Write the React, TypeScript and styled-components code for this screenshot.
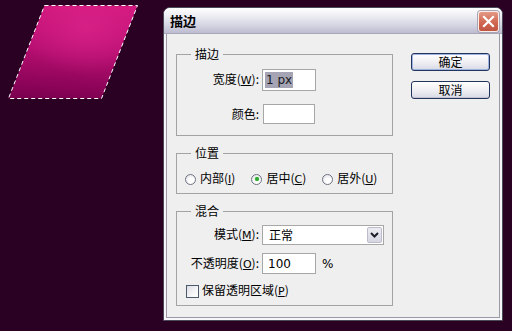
import React from 'react';
import styled, {createGlobalStyle} from 'styled-components';

const cjk = `"Noto Sans CJK SC", "DejaVu Sans", sans-serif`;
const latin = `"DejaVu Sans", "Noto Sans CJK SC", sans-serif`;

const GlobalStyle = createGlobalStyle`
    html, body {
        margin: 0;
        padding: 0;
        background: #2a0122;
    }
    body {
        font-family: ${cjk};
        font-size: 12px;
        color: #000;
    }
`;

const Key = ({k}: {k: string}) => (
    <>(<U>{k}</U>)</>
);

const App = () => {
    return (
        <Canvas>
            <GlobalStyle />
            <Shape width="163" height="110" viewBox="0 0 163 110">
                <defs>
                    <linearGradient id="fill" x1="0.45" y1="0" x2="0.35" y2="1">
                        <stop offset="0" stopColor="#d2187f" />
                        <stop offset="0.45" stopColor="#b90f72" />
                        <stop offset="1" stopColor="#7d0050" />
                    </linearGradient>
                    <radialGradient id="glow" cx="0.6" cy="0.25" r="0.5">
                        <stop offset="0" stopColor="#e0288f" stopOpacity="0.6" />
                        <stop offset="1" stopColor="#e0288f" stopOpacity="0" />
                    </radialGradient>
                </defs>
                <polygon points="44.5,5.5 137.5,5.5 101.5,98.5 8.5,98.5" fill="url(#fill)" />
                <polygon points="44.5,5.5 137.5,5.5 101.5,98.5 8.5,98.5" fill="url(#glow)" />
                <polygon points="44.5,5.5 137.5,5.5 101.5,98.5 8.5,98.5" fill="none"
                         stroke="#ffffff" strokeWidth="1" strokeDasharray="4 3" />
            </Shape>

            <Window>
                <TitleBar>
                    <Title>描边</Title>
                    <CloseButton>
                        <svg width="13" height="13" viewBox="0 0 13 13">
                            <path d="M2 2 L11 11 M11 2 L2 11" stroke="#fff" strokeWidth="2.2" strokeLinecap="square" />
                        </svg>
                    </CloseButton>
                </TitleBar>

                <Client>
                    <Groups>
                        <Group $pt={7} $pb={11}>
                            <Legend>描边</Legend>
                            <FormRow>
                                <Label>宽度<Key k="W" />:</Label>
                                <Field $w={54} $h={22}>
                                    <Selected>1 px</Selected>
                                </Field>
                            </FormRow>
                            <FormRow $gap={13}>
                                <Label>颜色:</Label>
                                <Field $w={52} $h={20} $ml={1} />
                            </FormRow>
                        </Group>

                        <Group $pt={9} $pb={5}>
                            <Legend>位置</Legend>
                            <RadioRow>
                                <RadioItem>
                                    <Radio />
                                    <span>内部<Key k="I" /></span>
                                </RadioItem>
                                <RadioItem>
                                    <Radio $checked />
                                    <span>居中<Key k="C" /></span>
                                </RadioItem>
                                <RadioItem>
                                    <Radio />
                                    <span>居外<Key k="U" /></span>
                                </RadioItem>
                            </RadioRow>
                        </Group>

                        <Group $pt={6} $pb={5}>
                            <Legend>混合</Legend>
                            <FormRow>
                                <Label>模式<Key k="M" />:</Label>
                                <Select>
                                    <SelectText>正常</SelectText>
                                    <DropButton>
                                        <svg width="9" height="6" viewBox="0 0 9 6">
                                            <path d="M1 1 L4.5 4.5 L8 1" fill="none" stroke="#1e1e28" strokeWidth="2" />
                                        </svg>
                                    </DropButton>
                                </Select>
                            </FormRow>
                            <FormRow $gap={8}>
                                <Label>不透明度<Key k="O" />:</Label>
                                <Field $w={54} $h={21}>
                                    <FieldText>100</FieldText>
                                </Field>
                                <Unit>%</Unit>
                            </FormRow>
                            <CheckRow>
                                <CheckBox />
                                <span>保留透明区域<Key k="P" /></span>
                            </CheckRow>
                        </Group>
                    </Groups>

                    <Buttons>
                        <Button $default>确定</Button>
                        <Button>取消</Button>
                    </Buttons>
                </Client>
            </Window>
        </Canvas>
    );
};

const Canvas = styled.div`
    width: 512px;
    height: 331px;
    display: flex;
    align-items: flex-start;
    overflow: hidden;
    background: #2a0122;
`;

const Shape = styled.svg`
    display: block;
    flex: none;
`;

const Window = styled.div`
    margin-top: 7px;
    width: 340px;
    box-sizing: border-box;
    border: 1px solid #4c4858;
    border-radius: 7px 7px 0 0;
    background: #f6f6fa;
    padding: 0 2px 2px;
    display: flex;
    flex-direction: column;
`;

const TitleBar = styled.div`
    height: 25px;
    margin: 0 -2px;
    padding: 0 3px 0 6px;
    display: flex;
    align-items: center;
    justify-content: space-between;
    border-radius: 6px 6px 0 0;
    background: linear-gradient(to bottom, #ffffff 0%, #eeeef4 30%, #d4d4e2 70%, #bdbcd0 100%);
    border-bottom: 1px solid #a6a6b6;
`;

const Title = styled.div`
    font-family: ${cjk};
    font-weight: bold;
    font-size: 13px;
    color: #000;
    line-height: 16px;
`;

const CloseButton = styled.div`
    width: 21px;
    height: 21px;
    box-sizing: border-box;
    margin-top: 2px;
    border: 1px solid #fbeee8;
    border-radius: 3px;
    background: linear-gradient(to bottom, #e39a86 0%, #d36a55 50%, #c05442 100%);
    display: flex;
    align-items: center;
    justify-content: center;
    box-shadow: 0 0 0 1px #a8a4b4;
`;

const Client = styled.div`
    display: flex;
    align-items: flex-start;
    background: #efefef;
    border: 1px solid #9a9aa6;
    border-top: none;
    padding: 12px 9px 11px 9px;
`;

const Groups = styled.div`
    display: flex;
    flex-direction: column;
    gap: 9px;
    width: 218px;
`;

const Group = styled.fieldset<{$pt: number; $pb: number}>`
    margin: 0;
    border: 1px solid #a3a3a3;
    padding: ${p => p.$pt}px 0 ${p => p.$pb}px 0;
    min-width: 0;
    line-height: 16px;
`;

const Legend = styled.legend`
    margin-left: 14px;
    padding: 0 4px;
    line-height: 16px;
    height: 16px;
    font-size: 12px;
`;

const FormRow = styled.div<{$gap?: number}>`
    display: flex;
    align-items: center;
    margin-top: ${p => p.$gap ?? 0}px;
`;

const Label = styled.div`
    width: 82px;
    margin-right: 3px;
    text-align: right;
    white-space: nowrap;
    line-height: 16px;
`;

const U = styled.span`
    text-decoration: underline;
    font-family: ${latin};
    font-size: 11px;
`;

const Field = styled.div<{$w: number; $h: number; $ml?: number}>`
    width: ${p => p.$w}px;
    height: ${p => p.$h}px;
    margin-left: ${p => p.$ml ?? 0}px;
    box-sizing: border-box;
    background: #fff;
    border: 1px solid #a7a7a7;
    display: flex;
    align-items: center;
    padding-left: 2px;
`;

const Selected = styled.span`
    background: #a4a4b4;
    color: #1a1a22;
    font-family: ${latin};
    font-size: 12px;
    line-height: 16px;
    padding: 0 1px;
`;

const FieldText = styled.span`
    font-family: ${latin};
    font-size: 12px;
    padding-left: 3px;
`;

const Unit = styled.span`
    margin-left: 6px;
    font-family: ${latin};
    font-size: 12px;
`;

const Select = styled.div`
    width: 122px;
    height: 20px;
    box-sizing: border-box;
    background: #fff;
    border: 1px solid #a7a7a7;
    display: flex;
    align-items: stretch;
    justify-content: space-between;
`;

const SelectText = styled.span`
    display: flex;
    align-items: center;
    padding-left: 6px;
`;

const DropButton = styled.div`
    width: 15px;
    margin: 1px;
    box-sizing: border-box;
    border: 1px solid #bcbccc;
    border-radius: 2px;
    background: linear-gradient(to bottom, #ececf2 0%, #d6d6e2 100%);
    display: flex;
    align-items: center;
    justify-content: center;
`;

const RadioRow = styled.div`
    display: flex;
    align-items: center;
    gap: 16px;
    padding-left: 8px;
    line-height: 16px;
`;

const RadioItem = styled.label`
    display: flex;
    align-items: center;
    gap: 4px;
`;

const Radio = styled.span<{$checked?: boolean}>`
    width: 11px;
    height: 11px;
    box-sizing: border-box;
    border-radius: 50%;
    border: 1px solid #6c7480;
    background: radial-gradient(circle at 60% 65%, #ffffff 30%, #dcdce4 100%);
    display: flex;
    align-items: center;
    justify-content: center;

    &::after {
        content: '';
        display: ${p => (p.$checked ? 'block' : 'none')};
        width: 4px;
        height: 4px;
        border-radius: 50%;
        background: #2ea82e;
        box-shadow: 0 0 1px #5ccd5c;
    }
`;

const CheckRow = styled.label`
    display: flex;
    align-items: center;
    gap: 3px;
    margin-top: 8px;
    padding-left: 9px;
    line-height: 16px;
`;

const CheckBox = styled.span`
    width: 13px;
    height: 13px;
    box-sizing: border-box;
    border: 1px solid #4c5a6c;
    background: linear-gradient(135deg, #dcdce4 0%, #f6f6f8 60%, #ffffff 100%);
`;

const Buttons = styled.div`
    margin-left: 18px;
    margin-top: 7px;
    display: flex;
    flex-direction: column;
    gap: 10px;
`;

const Button = styled.div<{$default?: boolean}>`
    width: 79px;
    height: 18px;
    box-sizing: border-box;
    border: 1px solid #23355c;
    border-radius: 3px;
    background: linear-gradient(to bottom, #ffffff 0%, #f0f0f4 50%, #d8d8e4 100%);
    box-shadow: ${p => (p.$default ? 'inset 0 0 0 1px #9db3e2' : 'inset 0 -1px 0 #c4c4d4')};
    display: flex;
    align-items: center;
    justify-content: center;
    font-size: 12px;
    line-height: 14px;
`;

export default App;
